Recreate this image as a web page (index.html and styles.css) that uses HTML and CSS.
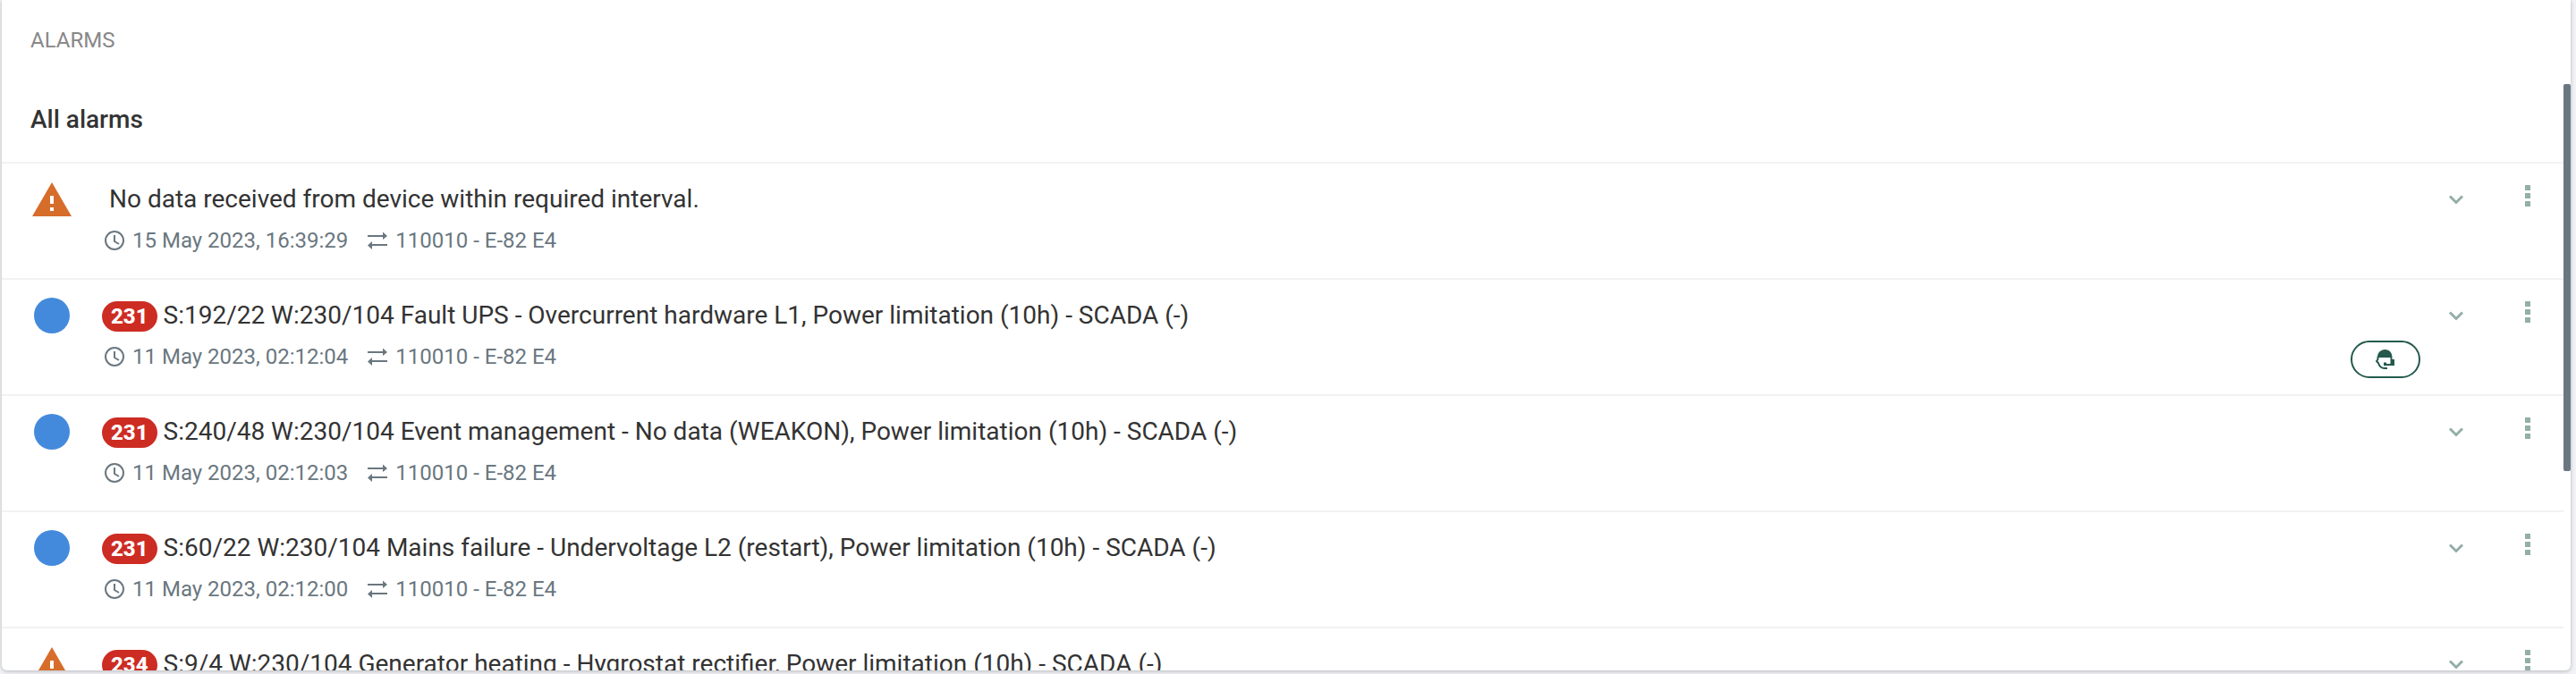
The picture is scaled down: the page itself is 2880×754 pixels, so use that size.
FILE: index.html
```
<!DOCTYPE html>
<html lang="en">
<head>
<meta charset="utf-8">
<title>Alarms</title>
<link rel="stylesheet" href="styles.css">
</head>
<body>
<svg class="symbols" aria-hidden="true">
  <symbol id="warning" viewBox="0 0 44 44"><path fill="#d76d2b" fill-rule="evenodd" d="M22 3 44 41H0ZM20 18v9h4v-9ZM20 31v4h4v-4Z"/></symbol>
  <symbol id="info" viewBox="0 0 44 44"><circle cx="22" cy="22" r="20" fill="#448adc"/></symbol>
  <symbol id="clock" viewBox="0 0 24 24"><g fill="none" stroke="currentColor" stroke-width="2"><circle cx="12" cy="12" r="10"/><path d="M12 6v7l5 3"/></g></symbol>
  <symbol id="swap" viewBox="0 0 24 24"><path d="M1 6h17V2.500L23 7l-5 4V8H1ZM23 16H6v-3L1 17.500 6 22v-4h17Z" fill="currentColor"/></symbol>
  <symbol id="chevron" viewBox="0 0 24 24"><path d="M5 8.500l7 7 7-7" fill="none" stroke="currentColor" stroke-width="3"/></symbol>
  <symbol id="dots" viewBox="0 0 6 24"><path d="M0 0h6v6H0ZM0 9h6v6H0ZM0 18h6v6H0Z" fill="currentColor"/></symbol>
  <symbol id="agent" viewBox="0 0 22 22"><path d="M2 9C2 3.500 5.500 0 10.500 0S18.500 3.500 18.500 9ZM16.500 9h2v2H21v7H9v-3.500h3V16h4.500Z" fill="currentColor"/><path d="M2.500 8v3L1 13l2 2c1 3.500 3 6 7 6h3" fill="none" stroke="currentColor" stroke-width="2"/></symbol>
</svg>
<main class="card">
  <h1 class="card-title">ALARMS</h1>
  <div class="viewport">
    <section class="content">
      <h2 class="list-title">All alarms</h2>
      <ul class="alarms">
        <li class="alarm">
          <svg class="severity"><use href="#warning"/></svg>
          <div class="details">
            <div class="headline"><span class="message plain">No data received from device within required interval.</span></div>
            <div class="meta"><span class="fact"><svg><use href="#clock"/></svg>15 May 2023, 16:39:29</span><span class="fact"><svg><use href="#swap"/></svg>110010 - E-82 E4</span></div>
          </div>
          <button class="expand" aria-label="Expand"><svg><use href="#chevron"/></svg></button>
          <button class="more" aria-label="More"><svg><use href="#dots"/></svg></button>
        </li>
        <li class="alarm">
          <svg class="severity"><use href="#info"/></svg>
          <div class="details">
            <div class="headline"><span class="code">231</span><span class="message">S:192/22 W:230/104 Fault UPS - Overcurrent hardware L1, Power limitation (10h) - SCADA (-)</span></div>
            <div class="meta"><span class="fact"><svg><use href="#clock"/></svg>11 May 2023, 02:12:04</span><span class="fact"><svg><use href="#swap"/></svg>110010 - E-82 E4</span></div>
          </div>
          <button class="support" aria-label="Support"><svg><use href="#agent"/></svg></button>
          <button class="expand" aria-label="Expand"><svg><use href="#chevron"/></svg></button>
          <button class="more" aria-label="More"><svg><use href="#dots"/></svg></button>
        </li>
        <li class="alarm">
          <svg class="severity"><use href="#info"/></svg>
          <div class="details">
            <div class="headline"><span class="code">231</span><span class="message">S:240/48 W:230/104 Event management - No data (WEAKON), Power limitation (10h) - SCADA (-)</span></div>
            <div class="meta"><span class="fact"><svg><use href="#clock"/></svg>11 May 2023, 02:12:03</span><span class="fact"><svg><use href="#swap"/></svg>110010 - E-82 E4</span></div>
          </div>
          <button class="expand" aria-label="Expand"><svg><use href="#chevron"/></svg></button>
          <button class="more" aria-label="More"><svg><use href="#dots"/></svg></button>
        </li>
        <li class="alarm">
          <svg class="severity"><use href="#info"/></svg>
          <div class="details">
            <div class="headline"><span class="code">231</span><span class="message">S:60/22 W:230/104 Mains failure - Undervoltage L2 (restart), Power limitation (10h) - SCADA (-)</span></div>
            <div class="meta"><span class="fact"><svg><use href="#clock"/></svg>11 May 2023, 02:12:00</span><span class="fact"><svg><use href="#swap"/></svg>110010 - E-82 E4</span></div>
          </div>
          <button class="expand" aria-label="Expand"><svg><use href="#chevron"/></svg></button>
          <button class="more" aria-label="More"><svg><use href="#dots"/></svg></button>
        </li>
        <li class="alarm">
          <svg class="severity"><use href="#warning"/></svg>
          <div class="details">
            <div class="headline"><span class="code">234</span><span class="message">S:9/4 W:230/104 Generator heating - Hygrostat rectifier, Power limitation (10h) - SCADA (-)</span></div>
          </div>
          <button class="expand" aria-label="Expand"><svg><use href="#chevron"/></svg></button>
          <button class="more" aria-label="More"><svg><use href="#dots"/></svg></button>
        </li>
      </ul>
    </section>
    <div class="track"><div class="thumb"></div></div>
  </div>
</main>
</body>
</html>
```
FILE: styles.css
```
* { box-sizing: border-box; }

body {
  margin: 0;
  height: 100vh;
  padding: 0 6px 4px 2px;
  background: #f0f2f5;
  color: #333;
  font-family: Roboto, "Liberation Sans", sans-serif;
}

.symbols { display: none; }

.card {
  display: flex;
  flex-direction: column;
  height: 100%;
  overflow: hidden;
  background: #fff;
  border-radius: 0 0 6px 6px;
  box-shadow: 0 1px 4px rgba(0, 0, 0, 0.25);
}

.card-title {
  margin: 0;
  padding: 31px 32px 35px;
  font-size: 24px;
  line-height: 28px;
  font-weight: 400;
  color: #888;
}

.viewport {
  display: flex;
  flex: 1;
  min-height: 0;
}

.content {
  flex: 1;
  min-width: 0;
  overflow: hidden;
}

.list-title {
  margin: 0;
  padding: 24px 32px 31px;
  font-size: 28px;
  line-height: 32px;
  font-weight: 500;
}

.alarms {
  margin: 0;
  padding: 0;
  list-style: none;
}

.alarm {
  display: flex;
  align-items: flex-start;
  min-height: 130px;
  padding: 18px 28px 16px 34px;
  border-top: 2px solid #f2f2f2;
}

.severity {
  flex: none;
  width: 44px;
  height: 44px;
  margin-right: 34px;
}

.details {
  flex: 1;
  min-width: 0;
  padding-top: 6px;
}

.headline {
  display: flex;
  min-height: 34px;
  margin-bottom: 14px;
  gap: 7px;
  font-size: 28px;
  line-height: 32px;
}

.plain { padding-left: 8px; }

.code {
  padding: 0 10px;
  border-radius: 17px;
  background: #cd2c23;
  color: #fff;
  font-size: 24px;
  line-height: 34px;
  font-weight: 800;
}

.meta {
  display: flex;
  gap: 21px;
  padding-left: 2px;
  color: #6a7780;
  font-size: 24px;
  line-height: 28px;
}

.fact {
  display: flex;
  align-items: center;
  gap: 8px;
}

.fact svg {
  width: 24px;
  height: 24px;
}

button {
  display: flex;
  align-items: center;
  justify-content: center;
  padding: 0;
  border: 0;
  background: none;
  color: #93aea8;
  cursor: pointer;
}

.expand {
  width: 40px;
  height: 44px;
  margin-right: 48px;
}

.expand svg {
  width: 24px;
  height: 24px;
}

.more {
  width: 24px;
  height: 36px;
}

.more svg {
  width: 6px;
  height: 24px;
}

.support {
  width: 78px;
  height: 42px;
  margin: 50px 20px 0 0;
  border: 2px solid #24594e;
  border-radius: 21px;
  color: #24594e;
}

.support svg {
  width: 22px;
  height: 22px;
}

.track {
  flex: none;
  width: 8px;
}

.thumb {
  height: 66%;
  border-radius: 2px;
  background: #6a7780;
}
```
